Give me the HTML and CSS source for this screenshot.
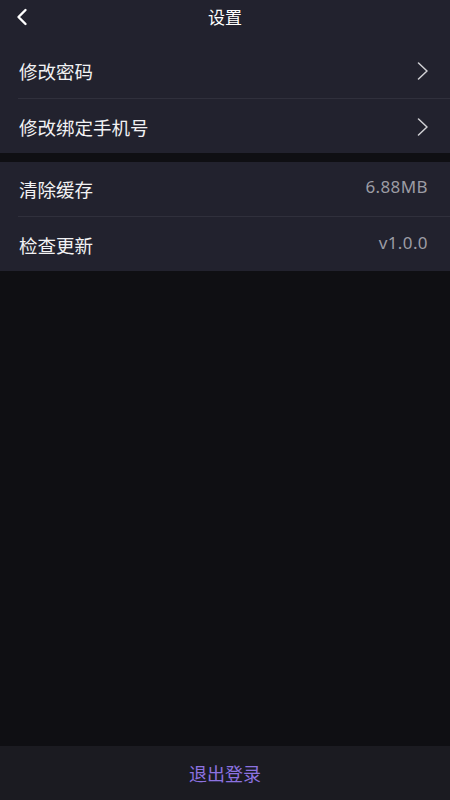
FILE: index.html
```html
<!DOCTYPE html>
<html lang="zh-CN">
<head>
<meta charset="utf-8">
<title>设置</title>
<link rel="stylesheet" href="styles.css">
</head>
<body>
<div class="page">
  <header class="header">
    <span class="back">
      <svg width="12" height="18" viewBox="0 0 12 18"><path d="M9.5 2 L2.5 9 L9.5 16" fill="none" stroke="#ffffff" stroke-width="2.4" stroke-linecap="round" stroke-linejoin="round"/></svg>
    </span>
    <h1 class="title">设置</h1>
  </header>
  <section class="group group-first">
    <div class="row">
      <span class="label">修改密码</span>
      <svg class="chev" width="12" height="18" viewBox="0 0 12 18"><path d="M1.5 1 L10 9 L1.5 17" fill="none" stroke="#d0d0d4" stroke-width="1.5" stroke-linecap="round" stroke-linejoin="round"/></svg>
    </div>
    <div class="row">
      <span class="label">修改绑定手机号</span>
      <svg class="chev" width="12" height="18" viewBox="0 0 12 18"><path d="M1.5 1 L10 9 L1.5 17" fill="none" stroke="#d0d0d4" stroke-width="1.5" stroke-linecap="round" stroke-linejoin="round"/></svg>
    </div>
  </section>
  <section class="group">
    <div class="row">
      <span class="label">清除缓存</span>
      <span class="value">6.88MB</span>
    </div>
    <div class="row">
      <span class="label">检查更新</span>
      <span class="value">v1.0.0</span>
    </div>
  </section>
  <div class="spacer"></div>
  <footer class="footer">
    <span class="logout">退出登录</span>
  </footer>
</div>
</body>
</html>
```
FILE: styles.css
```css
* { box-sizing: border-box; }
html, body {
  margin: 0;
  padding: 0;
  background: #0f0f13;
}
body {
  font-family: "Noto Sans CJK SC", "Noto Sans", sans-serif;
  color: #ffffff;
}
.page {
  width: 450px;
  height: 800px;
  display: flex;
  flex-direction: column;
}
.header {
  height: 44px;
  background: #22222e;
  display: flex;
  align-items: flex-start;
  justify-content: center;
  padding-top: 4px;
  position: relative;
}
.back {
  position: absolute;
  left: 16px;
  top: 8px;
  display: flex;
}
.title {
  margin: 0;
  font-size: 17px;
  font-weight: 400;
  line-height: 26px;
  color: #ffffff;
}
.group {
  background: #22222e;
  margin-top: 9px;
}
.group-first {
  margin-top: 0;
}
.row {
  height: 54px;
  display: flex;
  align-items: center;
  justify-content: space-between;
  padding: 0 22px 0 19px;
  position: relative;
}
.row + .row {
  height: 55px;
  padding-top: 3px;
}
.row + .row::before {
  content: "";
  position: absolute;
  left: 18px;
  right: 0;
  top: 0;
  height: 1px;
  background: #30303c;
}
.label {
  font-size: 18.5px;
  line-height: 26px;
  color: #f2f2f4;
}
.value {
  font-family: "Noto Sans", sans-serif;
  font-size: 17px;
  letter-spacing: 0.4px;
  line-height: 24px;
  color: #9c9ca4;
  padding-bottom: 5px;
}
.chev {
  display: block;
  margin-right: -1px;
}
.spacer {
  flex: 1;
}
.footer {
  height: 54px;
  background: #1b1b21;
  display: flex;
  align-items: center;
  justify-content: center;
}
.logout {
  font-size: 18px;
  line-height: 26px;
  color: #8c72e0;
}
```
